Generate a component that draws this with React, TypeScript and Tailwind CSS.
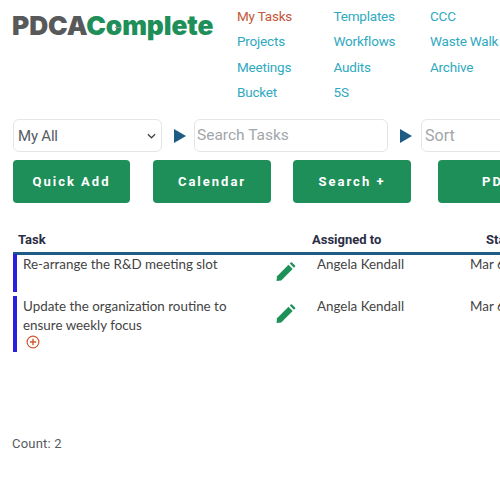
const navColumns = [
  ["My Tasks", "Projects", "Meetings", "Bucket"],
  ["Templates", "Workflows", "Audits", "5S"],
  ["CCC", "Waste Walk", "Archive"],
];

const buttons = [
  { label: "Quick Add", className: "w-[117px] mr-[23px] justify-center" },
  { label: "Calendar", className: "w-[118px] mr-[22px] justify-center" },
  { label: "Search +", className: "w-[118px] mr-[27px] justify-center" },
  { label: "PDCA Report", className: "w-[190px] pl-[44px]" },
];

const tasks = [
  { title: ["Re-arrange the R&D meeting slot"], height: "h-[38px]", extra: false },
  { title: ["Update the organization routine to", "ensure weekly focus"], height: "h-[56px]", extra: true },
];

const Arrow = () => (
  <svg viewBox="0 0 12 14" className="w-3 h-[14px] shrink-0 fill-[#1f5c85]">
    <path d="M0 0 L12 7 L0 14 Z" />
  </svg>
);

const Pencil = () => (
  <svg viewBox="0 0 20 20" className="w-[20px] h-[19px] fill-[#1e9158]">
    <path d="M0 20 L0.6 15 L12.6 3 L17 7.4 L5 19.4 Z" />
    <path d="M14 1.6 L15.2 0.4 Q15.7 0 16.2 0.4 L19.6 3.8 Q20 4.3 19.6 4.8 L18.4 6 Z" />
  </svg>
);

const AddCircle = () => (
  <svg viewBox="0 0 14 14" className="w-[14px] h-[14px] fill-none stroke-[#cf5a36]">
    <circle cx="7" cy="7" r="5.9" strokeWidth="1.2" />
    <path d="M7 3.8 V10.2 M3.8 7 H10.2" strokeWidth="1.4" />
  </svg>
);

export default function App() {
  return (
    <div className="w-[500px] h-[500px] overflow-hidden bg-white font-['Roboto',sans-serif]">
      <header className="flex h-[119px]">
        <div className="w-[237px] shrink-0 pl-3 pt-[8px]">
          <div className="relative font-['Inter',sans-serif] font-black text-[26.3px] leading-9 tracking-[-0.1px] whitespace-nowrap">
            <span className="text-[#58595b]">PDCA</span>
            <span className="text-[#1e8f59]">Complete</span>
            {/* little grey tick inside the logo's o */}
            <svg viewBox="0 0 6 3" className="absolute left-[103px] top-[18px] w-[6px] h-[3px] stroke-[#8f9193] fill-none">
              <path d="M0 1.5 H6" />
            </svg>
          </div>
        </div>
        <nav className="flex shrink-0 pt-[4px]">
          {navColumns.map((col, i) => (
            <ul key={i} className="w-[96.5px]">
              {col.map((item) => (
                <li
                  key={item}
                  className={`h-[25.3px] leading-[25px] text-[13.5px] tracking-[-0.2px] whitespace-nowrap ${
                    item === "My Tasks" ? "text-[#c5573a]" : "text-[#2fa9c0]"
                  }`}
                >
                  {item}
                </li>
              ))}
            </ul>
          ))}
        </nav>
      </header>

      <div className="flex items-center pl-[13px] h-[33px]">
        <div className="w-[149px] h-full shrink-0 flex items-center justify-between pl-[4px] pr-[4px] pt-[1px] border border-[#e3e5e8] rounded-md text-[15px] tracking-[-0.2px] text-[#555b61]">
          <span>My All</span>
          <svg viewBox="0 0 10 6" className="w-[9px] h-[6px] fill-none stroke-[#444] stroke-[1.4] mr-[1px]">
            <path d="M1 1 L5 5 L9 1" />
          </svg>
        </div>
        <div className="w-[32px] shrink-0 flex justify-center pl-[4px]">
          <Arrow />
        </div>
        <div className="w-[194px] h-full shrink-0 flex items-center pl-[2px] pt-[1px] border border-[#e3e5e8] rounded-md text-[15.5px] text-[#a3a6aa]">
          Search Tasks
        </div>
        <div className="w-[33px] shrink-0 flex justify-center pl-[2px]">
          <Arrow />
        </div>
        <div className="w-[120px] h-full shrink-0 flex items-center pl-[3px] border border-[#e3e5e8] rounded-md text-[16px] text-[#a3a6aa]">
          Sort
        </div>
      </div>

      <div className="flex pl-[13px] mt-[8px]">
        {buttons.map((b) => (
          <div
            key={b.label}
            className={`${b.className} shrink-0 h-[43px] flex items-center rounded bg-[#1e8f59] text-white text-[13px] font-bold tracking-[2px] whitespace-nowrap`}
          >
            {b.label}
          </div>
        ))}
      </div>

      <div className="mt-[27px] pl-[13px]">
        <div className="flex h-[22px] items-center pb-[1px] border-b-[3px] border-[#1f5c85] text-[13px] font-bold text-[#2a2e45] box-content -mt-[1px]">
          <div className="w-[299px] shrink-0 pl-[5px]">Task</div>
          <div className="w-[174px] shrink-0">Assigned to</div>
          <div>Start</div>
        </div>
        <div className="relative flex flex-col gap-1 -mt-[1px] font-['Lato',sans-serif] text-[13.4px] leading-[19px] text-[#444]">
          {tasks.map((t) => (
            <div key={t.title[0]} className={`flex ${t.height}`}>
              <div className="w-1 h-full shrink-0 bg-[#2a1fe0]" />
              <div className="w-[259px] shrink-0 pl-[6px] whitespace-nowrap pt-[1px]">
                {t.title.map((line) => (
                  <div key={line}>{line}</div>
                ))}
                {t.extra && (
                  <div className="pl-[3px]">
                    <AddCircle />
                  </div>
                )}
              </div>
              <div className="w-[41px] shrink-0 pt-[8px]">
                <Pencil />
              </div>
              <div className="w-[153px] shrink-0 whitespace-nowrap pt-[1px]">Angela Kendall</div>
              <div className="whitespace-nowrap pt-[1px]">Mar 6</div>
            </div>
          ))}
        </div>
      </div>

      <div className="mt-[82px] pl-3 text-[13px] tracking-[0.2px] text-[#555b61]">Count: 2</div>
    </div>
  );
}
